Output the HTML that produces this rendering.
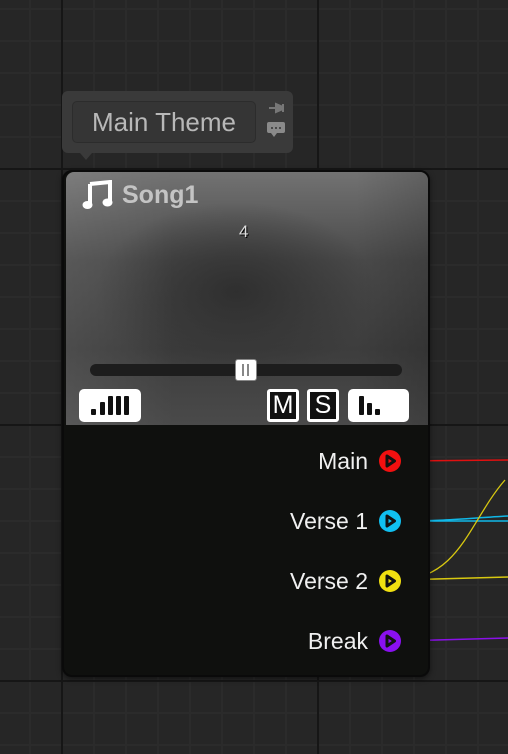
<!DOCTYPE html>
<html><head><style>
*{margin:0;padding:0;box-sizing:border-box}
body{width:508px;height:754px;overflow:hidden;position:relative;background:#262626;font-family:"Liberation Sans",sans-serif;
background-image:
linear-gradient(#161616,#161616),linear-gradient(#161616,#161616),linear-gradient(#161616,#161616),linear-gradient(#161616,#161616),linear-gradient(#161616,#161616),
linear-gradient(to right,#2b2b2b 2px,transparent 2px),linear-gradient(to bottom,#2b2b2b 2px,transparent 2px);
background-size:2px 754px,2px 754px,508px 2px,508px 2px,508px 2px,32px 32px,32px 32px;
background-position:61px 0,317px 0,0 168px,0 424px,0 680px,29px 0,0 8px;
background-repeat:no-repeat,no-repeat,no-repeat,no-repeat,no-repeat,repeat,repeat;}
.abs{position:absolute}
.pin{right:140px;color:#f0f0f0;font-size:23px;line-height:24px}
</style></head><body>
<svg class="abs" style="left:0;top:0" width="508" height="754">
<path d="M400 461 L508 460" stroke="#e01010" stroke-width="1.5" fill="none"/>
<path d="M400 521 C450 521 470 518 508 516" stroke="#10b8e8" stroke-width="1.5" fill="none"/>
<path d="M400 521 L508 521" stroke="#10b8e8" stroke-width="1.5" fill="none"/>
<path d="M400 580 C460 578 470 520 505 480" stroke="#d8c810" stroke-width="1.3" fill="none"/>
<path d="M400 580 L508 577" stroke="#d8c810" stroke-width="1.5" fill="none"/>
<path d="M400 641 L508 638" stroke="#8a10e8" stroke-width="1.5" fill="none"/>
</svg>
<div class="abs" style="left:62px;top:91px;width:231px;height:62px;background:#3a3a3a;border-radius:6px"></div>
<div class="abs" style="left:80px;top:153px;width:0;height:0;border-left:6px solid transparent;border-right:6px solid transparent;border-top:7px solid #3a3a3a"></div>
<div class="abs" style="left:72px;top:101px;width:184px;height:42px;background:#353535;border:1px solid #2c2c2c;border-radius:5px;color:#b8b8b8;font-size:26px;line-height:40px;text-align:center">Main Theme</div>
<svg class="abs" style="left:265px;top:100px" width="24" height="40">
<path d="M4 8 L11 8 M11 4 L11 12 L18 9 L18 7 Z M18 4 L18 12" stroke="#777" stroke-width="2" fill="#777"/>
<rect x="2" y="22" width="18" height="11" rx="2" fill="#8a8a8a"/>
<path d="M6 33 L9 37 L12 33" fill="#8a8a8a"/>
<circle cx="7" cy="28" r="1" fill="#333"/><circle cx="11" cy="28" r="1" fill="#333"/><circle cx="15" cy="28" r="1" fill="#333"/>
</svg>
<div class="abs" style="left:62px;top:170px;width:368px;height:507px;background:#0f100e;border:2px solid #0a0a0a;border-radius:10px;box-shadow:0 2px 6px rgba(0,0,0,.5)"></div>
<div class="abs" style="left:66px;top:172px;width:362px;height:253px;border-radius:8px 8px 0 0;
background:radial-gradient(ellipse 140px 90px at 170px 120px,#2f2f2f,rgba(47,47,47,0) 100%),linear-gradient(to bottom,#727272 0%,#4a4a4a 35%,#3d3d3d 70%,#4a4a4a 100%);"></div>
<div class="abs" style="left:66px;top:172px;width:362px;height:253px;background:linear-gradient(to right,rgba(255,255,255,.08),rgba(0,0,0,0) 30%,rgba(0,0,0,0) 80%,rgba(0,0,0,.15));border-radius:8px 8px 0 0"></div>
<svg class="abs" style="left:82px;top:180px" width="32" height="32">
<path d="M8 4 L28 2 L28 22" stroke="#fff" stroke-width="4" fill="none"/>
<path d="M8 4 L8 24" stroke="#fff" stroke-width="4"/>
<ellipse cx="5.5" cy="25" rx="5" ry="4" fill="#fff"/>
<ellipse cx="25.5" cy="22.5" rx="5" ry="4" fill="#fff"/>
</svg>
<div class="abs" style="left:122px;top:180px;color:#c4c4c4;font-size:25px;font-weight:bold;line-height:30px">Song1</div>
<div class="abs" style="left:239px;top:222px;color:#ddd;font-size:17px;text-shadow:1px 1px 0 #000">4</div>
<div class="abs" style="left:90px;top:364px;width:312px;height:12px;background:#1d1d1d;border-radius:6px"></div>
<div class="abs" style="left:235px;top:359px;width:22px;height:22px;background:#fff;border-radius:3px;border:1px solid #888"></div>
<div class="abs" style="left:242px;top:364px;width:2px;height:12px;background:#888"></div>
<div class="abs" style="left:247px;top:364px;width:2px;height:12px;background:#888"></div>
<div class="abs" style="left:79px;top:389px;width:62px;height:33px;background:#fff;border-radius:5px"></div>
<div class="abs" style="left:91px;top:409px;width:5px;height:6px;background:#111;border-radius:1px"></div>
<div class="abs" style="left:100px;top:402px;width:5px;height:13px;background:#111;border-radius:1px"></div>
<div class="abs" style="left:108px;top:396px;width:5px;height:19px;background:#111;border-radius:1px"></div>
<div class="abs" style="left:116px;top:396px;width:5px;height:19px;background:#111;border-radius:1px"></div>
<div class="abs" style="left:124px;top:396px;width:5px;height:19px;background:#111;border-radius:1px"></div>
<div class="abs" style="left:267px;top:389px;width:32px;height:33px;background:#111;border:3px solid #fff;border-radius:3px;color:#fff;font-size:25px;line-height:27px;text-align:center">M</div>
<div class="abs" style="left:307px;top:389px;width:32px;height:33px;background:#111;border:3px solid #fff;border-radius:3px;color:#fff;font-size:25px;line-height:27px;text-align:center">S</div>
<div class="abs" style="left:348px;top:389px;width:61px;height:33px;background:#fff;border-radius:5px"></div>
<div class="abs" style="left:359px;top:396px;width:5px;height:19px;background:#111;border-radius:1px"></div>
<div class="abs" style="left:367px;top:403px;width:5px;height:12px;background:#111;border-radius:1px"></div>
<div class="abs" style="left:375px;top:409px;width:5px;height:6px;background:#111;border-radius:1px"></div>
<div class="abs pin" style="top:449px">Main</div>
<div class="abs pin" style="top:509px">Verse 1</div>
<div class="abs pin" style="top:569px">Verse 2</div>
<div class="abs pin" style="top:629px">Break</div>
<svg class="abs" style="left:378px;top:449px" width="24" height="204">
<circle cx="12" cy="12" r="11" fill="#f21010"/><path d="M9 7 L16.5 12 L9 17 Z" fill="none" stroke="#111" stroke-width="3" stroke-linejoin="round"/>
<circle cx="12" cy="72" r="11" fill="#10c0f0"/><path d="M9 67 L16.5 72 L9 77 Z" fill="none" stroke="#111" stroke-width="3" stroke-linejoin="round"/>
<circle cx="12" cy="132" r="11" fill="#f0e010"/><path d="M9 127 L16.5 132 L9 137 Z" fill="none" stroke="#111" stroke-width="3" stroke-linejoin="round"/>
<circle cx="12" cy="192" r="11" fill="#8a10f0"/><path d="M9 187 L16.5 192 L9 197 Z" fill="none" stroke="#111" stroke-width="3" stroke-linejoin="round"/>
</svg>
</body></html>
